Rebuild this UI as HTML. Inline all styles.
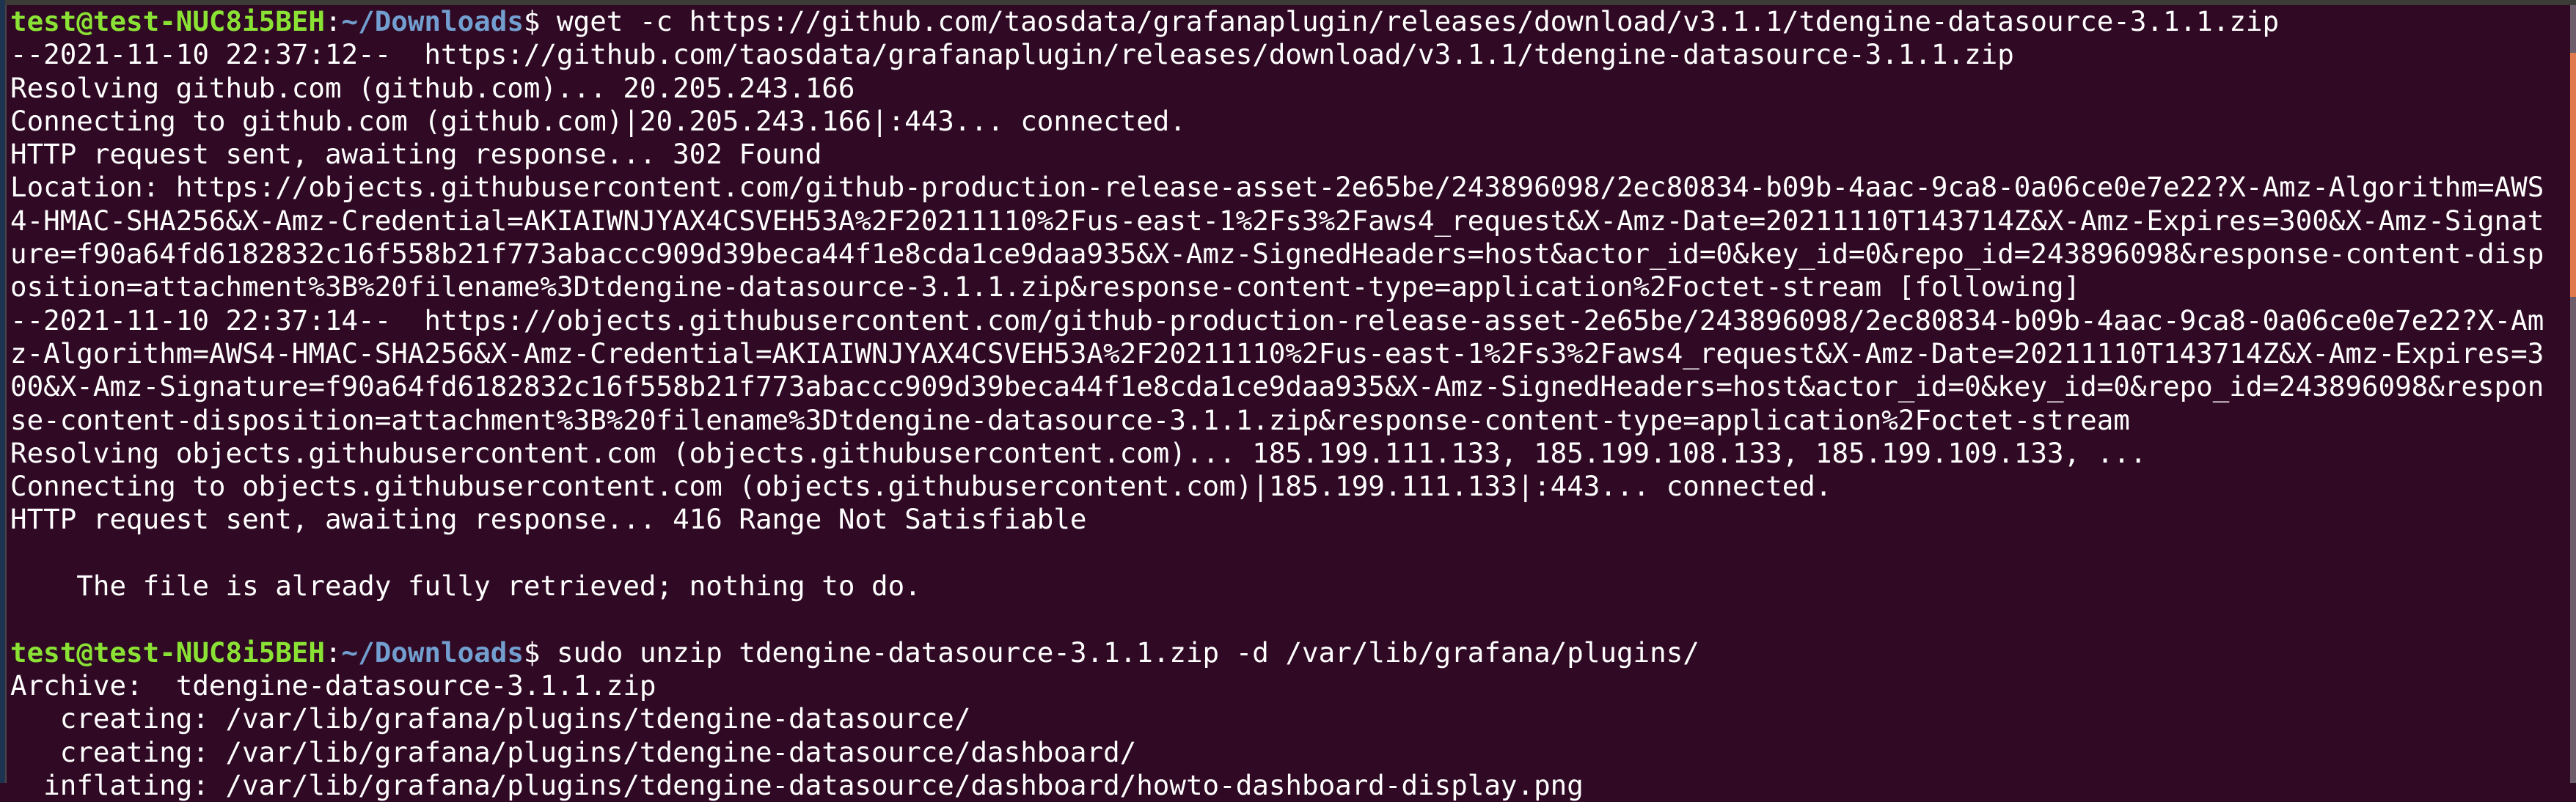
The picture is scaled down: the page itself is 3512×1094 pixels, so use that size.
<!DOCTYPE html>
<html><head><meta charset="utf-8"><style>
html,body{margin:0;padding:0;width:3512px;height:1068px;overflow:hidden;background:#300a24;}
#top{position:absolute;left:0;top:0;width:3512px;height:7px;background:#3c3b37;}
#left{position:absolute;left:0;top:0;width:7px;height:1068px;background:#1d3350;}
#left2{position:absolute;left:7px;top:7px;width:2px;height:1061px;background:#4a4548;}
#sb{position:absolute;left:3504px;top:7px;width:8px;height:1061px;background:#6e5e6b;}
#thumb{position:absolute;left:3504px;top:72px;width:8px;height:333px;background:#e07a4e;}
pre{position:absolute;left:14px;top:7px;margin:0;font-family:"DejaVu Sans Mono","Liberation Mono",monospace;font-size:37.5px;line-height:45.3px;color:#fff;white-space:pre;}
.g{color:#8ae234;font-weight:bold}.b{color:#729fcf;font-weight:bold}
</style></head><body>
<div id="top"></div><div id="left"></div><div id="left2"></div><div id="sb"></div><div id="thumb"></div>
<pre><span class="g">test@test-NUC8i5BEH</span>:<span class="b">~/Downloads</span>$ wget -c https://github.com/taosdata/grafanaplugin/releases/download/v3.1.1/tdengine-datasource-3.1.1.zip
--2021-11-10 22:37:12--  https://github.com/taosdata/grafanaplugin/releases/download/v3.1.1/tdengine-datasource-3.1.1.zip
Resolving github.com (github.com)... 20.205.243.166
Connecting to github.com (github.com)|20.205.243.166|:443... connected.
HTTP request sent, awaiting response... 302 Found
Location: https://objects.githubusercontent.com/github-production-release-asset-2e65be/243896098/2ec80834-b09b-4aac-9ca8-0a06ce0e7e22?X-Amz-Algorithm=AWS
4-HMAC-SHA256&amp;X-Amz-Credential=AKIAIWNJYAX4CSVEH53A%2F20211110%2Fus-east-1%2Fs3%2Faws4_request&amp;X-Amz-Date=20211110T143714Z&amp;X-Amz-Expires=300&amp;X-Amz-Signat
ure=f90a64fd6182832c16f558b21f773abaccc909d39beca44f1e8cda1ce9daa935&amp;X-Amz-SignedHeaders=host&amp;actor_id=0&amp;key_id=0&amp;repo_id=243896098&amp;response-content-disp
osition=attachment%3B%20filename%3Dtdengine-datasource-3.1.1.zip&amp;response-content-type=application%2Foctet-stream [following]
--2021-11-10 22:37:14--  https://objects.githubusercontent.com/github-production-release-asset-2e65be/243896098/2ec80834-b09b-4aac-9ca8-0a06ce0e7e22?X-Am
z-Algorithm=AWS4-HMAC-SHA256&amp;X-Amz-Credential=AKIAIWNJYAX4CSVEH53A%2F20211110%2Fus-east-1%2Fs3%2Faws4_request&amp;X-Amz-Date=20211110T143714Z&amp;X-Amz-Expires=3
00&amp;X-Amz-Signature=f90a64fd6182832c16f558b21f773abaccc909d39beca44f1e8cda1ce9daa935&amp;X-Amz-SignedHeaders=host&amp;actor_id=0&amp;key_id=0&amp;repo_id=243896098&amp;respon
se-content-disposition=attachment%3B%20filename%3Dtdengine-datasource-3.1.1.zip&amp;response-content-type=application%2Foctet-stream
Resolving objects.githubusercontent.com (objects.githubusercontent.com)... 185.199.111.133, 185.199.108.133, 185.199.109.133, ...
Connecting to objects.githubusercontent.com (objects.githubusercontent.com)|185.199.111.133|:443... connected.
HTTP request sent, awaiting response... 416 Range Not Satisfiable

    The file is already fully retrieved; nothing to do.

<span class="g">test@test-NUC8i5BEH</span>:<span class="b">~/Downloads</span>$ sudo unzip tdengine-datasource-3.1.1.zip -d /var/lib/grafana/plugins/
Archive:  tdengine-datasource-3.1.1.zip
   creating: /var/lib/grafana/plugins/tdengine-datasource/
   creating: /var/lib/grafana/plugins/tdengine-datasource/dashboard/
  inflating: /var/lib/grafana/plugins/tdengine-datasource/dashboard/howto-dashboard-display.png</pre>
</body></html>
